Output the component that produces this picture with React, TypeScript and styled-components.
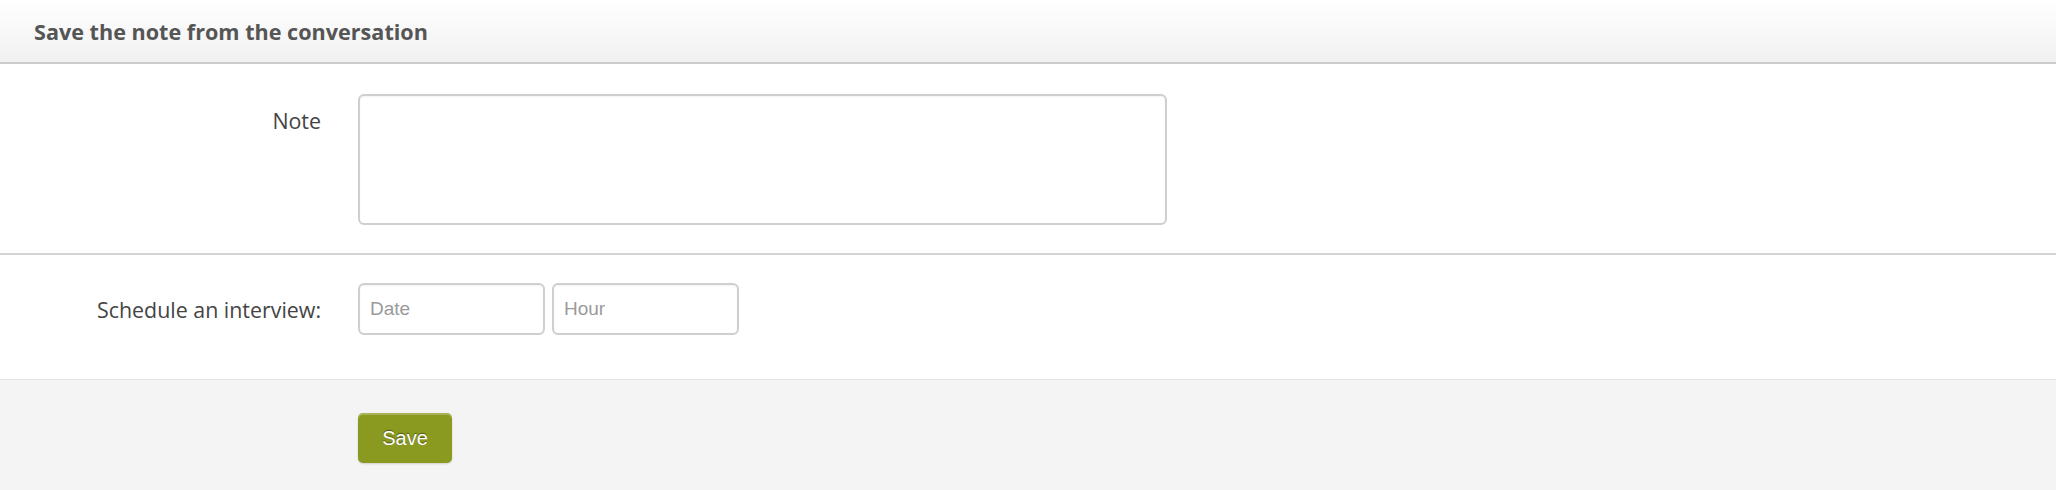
import styled, { createGlobalStyle } from "styled-components";

const GlobalStyle = createGlobalStyle`
  html, body {
    margin: 0;
    padding: 0;
    background: #fff;
  }
  body {
    font-family: "Open Sans", "Liberation Sans", sans-serif;
    color: #444;
  }
  * { box-sizing: border-box; }
`;

const Panel = styled.div`
  width: 100%;
  height: 490px;
  display: flex;
  flex-direction: column;
  background: #fff;
`;

const Header = styled.header`
  height: 64px;
  display: flex;
  align-items: center;
  padding: 0 34px;
  background: linear-gradient(to bottom, #ffffff 0%, #f1f1f1 100%);
  border-bottom: 2px solid #cccccc;
`;

const Title = styled.h2`
  margin: 0;
  font-family: "Open Sans", sans-serif;
  font-weight: 700;
  font-size: 21.6px;
  color: #555;
`;

const Row = styled.div<{ $pad: string; $align?: string }>`
  display: grid;
  grid-template-columns: 321px 1fr;
  column-gap: 37px;
  align-items: ${p => p.$align ?? "center"};
  padding: ${p => p.$pad};
  border-bottom: 2px solid #d4d4d4;
`;

const Label = styled.label<{ $top?: number }>`
  text-align: right;
  font-size: 21.4px;
  color: #444;
  padding-top: ${p => p.$top ?? 0}px;
`;

const NoteArea = styled.textarea`
  width: 809px;
  height: 131px;
  border: 2px solid #cfcfcf;
  border-radius: 6px;
  resize: none;
  outline: none;
  padding: 8px 10px;
  font-family: "Liberation Sans", sans-serif;
  font-size: 18px;
  box-shadow: inset 0 1px 2px rgba(0, 0, 0, 0.05);
`;

const Inputs = styled.div`
  display: flex;
  gap: 7px;
`;

const TextInput = styled.input`
  width: 187px;
  height: 52px;
  border: 2px solid #cfcfcf;
  border-radius: 6px;
  outline: none;
  padding: 0 10px;
  font-family: "Liberation Sans", sans-serif;
  font-size: 19px;
  color: #444;
  box-shadow: inset 0 1px 2px rgba(0, 0, 0, 0.05);
  &::placeholder {
    color: #9a9a9a;
  }
`;

const Footer = styled.div`
  flex: 1;
  background: #f4f4f4;
  border-top: 1px solid #e4e4e4;
  margin-top: -2px;
  display: grid;
  grid-template-columns: 321px 1fr;
  column-gap: 37px;
  align-items: start;
  padding-top: 33px;
`;

const SaveButton = styled.button`
  grid-column: 2;
  width: 94px;
  height: 50px;
  border: none;
  border-radius: 5px;
  background: #8a9a21;
  box-shadow: inset 0 2px 0 rgba(255, 255, 255, 0.25), 0 1px 2px rgba(0, 0, 0, 0.15);
  color: #fff;
  font-family: "Liberation Sans", sans-serif;
  font-size: 20px;
  text-shadow: 0 -1px 1px rgba(0, 0, 0, 0.45);
  cursor: pointer;
`;

export default function App() {
  return (
    <>
      <GlobalStyle />
      <Panel>
        <Header>
          <Title>Save the note from the conversation</Title>
        </Header>
        <Row $pad="30px 0 28px" $align="start">
          <Label $top={12}>Note</Label>
          <NoteArea />
        </Row>
        <Row $pad="28px 0 44px">
          <Label>Schedule an interview:</Label>
          <Inputs>
            <TextInput placeholder="Date" />
            <TextInput placeholder="Hour" />
          </Inputs>
        </Row>
        <Footer>
          <SaveButton>Save</SaveButton>
        </Footer>
      </Panel>
    </>
  );
}
